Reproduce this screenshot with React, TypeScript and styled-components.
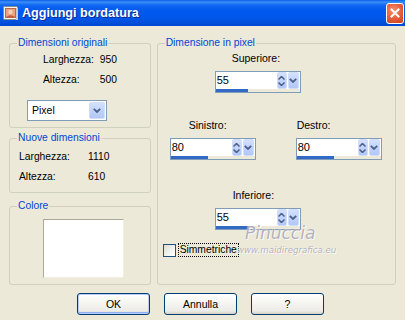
import React from "react";
import styled, { createGlobalStyle } from "styled-components";

const GlobalStyle = createGlobalStyle`
  html, body {
    margin: 0;
    padding: 0;
    background: #ece9d8;
  }
`;

// Window frame
const Window = styled.div`
  position: relative;
  width: 405px;
  height: 320px;
  overflow: hidden;
  background: #ece9d8;
  font-family: "Liberation Sans", Arial, sans-serif;
  font-size: 10.3px;
  color: #000;
`;

const TitleBar = styled.div`
  display: flex;
  align-items: center;
  height: 26px;
  padding-left: 3px;
  box-sizing: border-box;
  background: linear-gradient(
    180deg,
    #0a5de8 0px,
    #3d8ff6 2px,
    #1068f2 5px,
    #0058ee 11px,
    #0055e6 19px,
    #0049cf 26px
  );
`;

const TitleText = styled.span`
  margin-left: 3px;
  color: #fff;
  font-family: "Liberation Sans", Arial, sans-serif;
  font-weight: bold;
  font-size: 12.6px;
  text-shadow: 1px 1px 0 #0a2a9a;
`;

const CloseButton = styled.div`
  margin-left: auto;
  margin-right: 1px;
  width: 18px;
  height: 21px;
  box-sizing: border-box;
  border: 1px solid #fff;
  border-radius: 3px;
  background: radial-gradient(circle at 40% 35%, #f4926e 0%, #e45a38 55%, #cc3e1e 100%);
  display: flex;
  align-items: center;
  justify-content: center;
`;

// Body layout
const Main = styled.div`
  display: flex;
  gap: 6px;
  padding: 11px 9px 0 9px;
`;

const Column = styled.div`
  display: flex;
  flex-direction: column;
  width: 142px;
`;

const Group = styled.fieldset<{ $pad: string; $gapTop?: number; $width?: number }>`
  margin: ${(p) => p.$gapTop ?? 0}px 0 0 0;
  padding: ${(p) => p.$pad};
  border: 1px solid #d0d0bf;
  border-radius: 3px;
  min-width: 0;
  box-sizing: border-box;
  ${(p) => (p.$width ? `width: ${p.$width}px;` : "")}
`;

const Legend = styled.legend`
  padding: 0 1px;
  margin-left: 7px;
  color: #0046d5;
  line-height: 12px;
`;

const InfoRow = styled.div<{ $indent: number; $labelWidth: number; $valueWidth: number; $right?: boolean }>`
  display: grid;
  grid-template-columns: ${(p) => p.$labelWidth}px ${(p) => p.$valueWidth}px;
  padding-left: ${(p) => p.$indent}px;
  height: 20px;
  line-height: 20px;
  & > span:last-child {
    text-align: ${(p) => (p.$right ? "right" : "left")};
  }
`;

// Combo "Pixel"
const Select = styled.div`
  display: flex;
  margin: 10px 0 0 17px;
  width: 80px;
  height: 21px;
  box-sizing: border-box;
  border: 1px solid #7f9db9;
  background: #fff;
`;

const SelectText = styled.span`
  flex: 1;
  padding-left: 4px;
  line-height: 19px;
  font-size: 10.5px;
`;

const ComboButton = styled.div<{ $w: number }>`
  width: ${(p) => p.$w}px;
  margin: 1px 1px 1px 0;
  box-sizing: border-box;
  border: 1px solid #d2def8;
  border-radius: 2px;
  background: linear-gradient(180deg, #d4e1fd 0%, #c1d3fb 50%, #b2c7f6 100%);
  display: flex;
  align-items: center;
  justify-content: center;
`;

const Swatch = styled.div`
  margin-left: 33px;
  width: 81px;
  height: 59px;
  box-sizing: border-box;
  background: #fff;
  border-top: 1px solid #aca899;
  border-left: 1px solid #aca899;
  border-right: 1px solid #f1efe2;
  border-bottom: 1px solid #f1efe2;
`;

// Spin fields
const SpinBlock = styled.div<{ $left: number; $top: number }>`
  display: flex;
  flex-direction: column;
  margin-left: ${(p) => p.$left}px;
  margin-top: ${(p) => p.$top}px;
  width: 86px;
`;

const SpinLabel = styled.span<{ $indent: number }>`
  padding-left: ${(p) => p.$indent}px;
  line-height: 12px;
  font-size: 10.5px;
  white-space: nowrap;
`;

const SpinBox = styled.div`
  margin-top: 7px;
  width: 86px;
  height: 22px;
  box-sizing: border-box;
  border: 1px solid #7f9db9;
  background: #fff;
  display: flex;
  flex-direction: column;
`;

const SpinTop = styled.div`
  display: flex;
  height: 17px;
`;

const SpinValue = styled.span`
  flex: 1;
  padding-left: 1px;
  line-height: 17px;
  font-size: 11px;
`;

const SpinArrows = styled(ComboButton)`
  margin: 0 1px 0 0;
  flex-direction: column;
  gap: 2px;
`;

const DropButton = styled(ComboButton)`
  margin: 0 1px 0 0;
`;

const SpinTrack = styled.div`
  height: 3px;
  background: #ece9d8;
`;

const SpinFill = styled.div`
  height: 3px;
  background: #316ac5;
`;

const SideRow = styled.div`
  display: flex;
  gap: 40px;
`;

const CheckRow = styled.div`
  display: flex;
  align-items: center;
  margin: 13px 0 0 5px;
`;

const CheckBox = styled.div`
  width: 13px;
  height: 13px;
  box-sizing: border-box;
  border: 1px solid #1c5180;
  background: linear-gradient(135deg, #dcdcd7 0%, #f4f4f0 60%, #fff 100%);
`;

const CheckLabel = styled.span`
  margin-left: 2px;
  padding: 0 1px;
  border: 1px dotted #000;
  line-height: 12px;
  font-size: 10.3px;
`;

// Buttons
const ButtonRow = styled.div`
  display: flex;
  justify-content: center;
  gap: 14px;
  margin-top: 8px;
  padding-right: 4px;
`;

const Button = styled.button<{ $default?: boolean }>`
  width: 73px;
  height: 22px;
  box-sizing: border-box;
  padding: 0;
  border: 1px solid #003c74;
  border-radius: 3px;
  background: linear-gradient(180deg, #ffffff 0%, #f6f6f2 40%, #ecebe6 85%, #d6d0c5 100%);
  font-family: "Liberation Sans", Arial, sans-serif;
  font-size: 10.5px;
  color: #000;
  box-shadow: ${(p) =>
    p.$default ? "inset 0 0 0 1px #b7cdf5, inset 0 -1px 0 1px #8fb0ee" : "none"};
`;

// Watermark over the dialog
const Watermark = styled.div`
  position: absolute;
  left: 237px;
  top: 223px;
  display: flex;
  flex-direction: column;
  align-items: flex-start;
  pointer-events: none;
  font-family: "DejaVu Sans", sans-serif;
  font-style: oblique;
  color: rgba(125, 125, 150, 0.6);
  text-shadow: 0 0 1px #fff, 1px 1px 0 rgba(255, 255, 255, 0.7);
`;

const WaterName = styled.span`
  margin-left: 8px;
  font-size: 17px;
  line-height: 20px;
`;

const WaterUrl = styled.span`
  margin-top: 2px;
  font-size: 8.6px;
  line-height: 11px;
`;

const UpDown = () => (
  <>
    <svg width="7" height="4" viewBox="0 0 7 4">
      <path d="M0.5 3.5 L3.5 0.5 L6.5 3.5" fill="none" stroke="#4d6185" strokeWidth="1.5" />
    </svg>
    <svg width="7" height="4" viewBox="0 0 7 4">
      <path d="M0.5 0.5 L3.5 3.5 L6.5 0.5" fill="none" stroke="#4d6185" strokeWidth="1.5" />
    </svg>
  </>
);

const Chevron = () => (
  <svg width="8" height="5" viewBox="0 0 8 5">
    <path d="M0.8 0.8 L4 4 L7.2 0.8" fill="none" stroke="#4d6185" strokeWidth="1.8" />
  </svg>
);

interface SpinProps {
  label: string;
  labelIndent: number;
  value: number;
  left: number;
  top: number;
  fill: number;
}

const SpinField = ({ label, labelIndent, value, left, top, fill }: SpinProps) => (
  <SpinBlock $left={left} $top={top}>
    <SpinLabel $indent={labelIndent}>{label}</SpinLabel>
    <SpinBox>
      <SpinTop>
        <SpinValue>{value}</SpinValue>
        <SpinArrows $w={10}>
          <UpDown />
        </SpinArrows>
        <DropButton $w={11}>
          <Chevron />
        </DropButton>
      </SpinTop>
      <SpinTrack>
        <SpinFill style={{ width: `${fill}px` }} />
      </SpinTrack>
    </SpinBox>
  </SpinBlock>
);

const App = () => {
  return (
    <Window>
      <GlobalStyle />
      <TitleBar>
        <svg width="16" height="16" viewBox="0 0 16 16">
          <rect x="0.5" y="1.5" width="14" height="13" rx="1" fill="#f4f4f4" stroke="#8a8a8a" />
          <rect x="2.5" y="3.5" width="10" height="9" fill="#e9a47e" stroke="#b86a48" />
          <circle cx="7.5" cy="7" r="2.2" fill="#f7d2b8" />
          <path d="M3 12 Q7.5 8.5 12 12 Z" fill="#c8553a" />
          <rect x="13" y="3" width="2" height="12" fill="#c9c9c9" />
        </svg>
        <TitleText>Aggiungi bordatura</TitleText>
        <CloseButton>
          <svg width="10" height="10" viewBox="0 0 10 10">
            <path d="M1.5 1.5 L8.5 8.5 M8.5 1.5 L1.5 8.5" stroke="#fff" strokeWidth="2" strokeLinecap="square" />
          </svg>
        </CloseButton>
      </TitleBar>

      <Main>
        <Column>
          <Group $pad="1px 0 6px 0">
            <Legend>Dimensioni originali</Legend>
            <InfoRow $indent={33} $labelWidth={50} $valueWidth={24} $right>
              <span>Larghezza:</span>
              <span>950</span>
            </InfoRow>
            <InfoRow $indent={33} $labelWidth={50} $valueWidth={24} $right>
              <span>Altezza:</span>
              <span>500</span>
            </InfoRow>
            <Select>
              <SelectText>Pixel</SelectText>
              <ComboButton $w={16}>
                <Chevron />
              </ComboButton>
            </Select>
          </Group>

          <Group $pad="3px 0 5px 0" $gapTop={4}>
            <Legend>Nuove dimensioni</Legend>
            <InfoRow $indent={9} $labelWidth={69} $valueWidth={40}>
              <span>Larghezza:</span>
              <span>1110</span>
            </InfoRow>
            <InfoRow $indent={9} $labelWidth={69} $valueWidth={40}>
              <span>Altezza:</span>
              <span>610</span>
            </InfoRow>
          </Group>

          <Group $pad="7px 0 6px 0" $gapTop={7}>
            <Legend>Colore</Legend>
            <Swatch />
          </Group>
        </Column>

        <Group $pad="0 0 27px 0" $width={240}>
          <Legend>Dimensione in pixel</Legend>
          <SpinField label="Superiore:" labelIndent={17} value={55} left={57} top={3} fill={32} />
          <SideRow>
            <SpinField label="Sinistro:" labelIndent={19} value={80} left={12} top={26} fill={37} />
            <SpinField label="Destro:" labelIndent={1} value={80} left={0} top={26} fill={37} />
          </SideRow>
          <SpinField label="Inferiore:" labelIndent={18} value={55} left={57} top={29} fill={32} />
          <CheckRow>
            <CheckBox />
            <CheckLabel>Simmetriche</CheckLabel>
          </CheckRow>
        </Group>
      </Main>

      <ButtonRow>
        <Button $default>OK</Button>
        <Button>Annulla</Button>
        <Button>?</Button>
      </ButtonRow>

      <Watermark>
        <WaterName>Pinuccia</WaterName>
        <WaterUrl>www.maidiregrafica.eu</WaterUrl>
      </Watermark>
    </Window>
  );
};

export default App;
